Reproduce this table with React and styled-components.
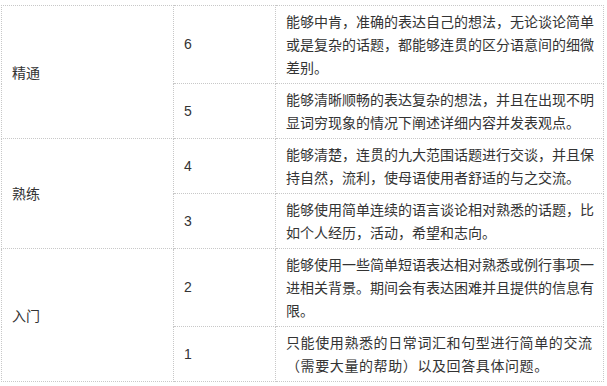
import React from "react"
import styled, { createGlobalStyle } from "styled-components"

const levels = [
  {
    name: "精通",
    rows: [
      { score: 6, text: "能够中肯，准确的表达自己的想法，无论谈论简单或是复杂的话题，都能够连贯的区分语意间的细微差别。" },
      { score: 5, text: "能够清晰顺畅的表达复杂的想法，并且在出现不明显词穷现象的情况下阐述详细内容并发表观点。" },
    ],
  },
  {
    name: "熟练",
    rows: [
      { score: 4, text: "能够清楚，连贯的九大范围话题进行交谈，并且保持自然，流利，使母语使用者舒适的与之交流。" },
      { score: 3, text: "能够使用简单连续的语言谈论相对熟悉的话题，比如个人经历，活动，希望和志向。" },
    ],
  },
  {
    name: "入门",
    rows: [
      { score: 2, text: "能够使用一些简单短语表达相对熟悉或例行事项一进相关背景。期间会有表达困难并且提供的信息有限。" },
      { score: 1, text: "只能使用熟悉的日常词汇和句型进行简单的交流（需要大量的帮助）以及回答具体问题。", wide: true },
    ],
  },
]

export default function App() {
  return (
    <>
      <GlobalStyle />
      <Table>
        <colgroup>
          <Col $w={172} />
          <Col $w={102} />
          <Col $w={328} />
        </colgroup>
        <tbody>
          {levels.map((level) =>
            level.rows.map((row, i) => (
              <tr key={row.score}>
                {i === 0 && <Level rowSpan={level.rows.length}>{level.name}</Level>}
                <Score>{row.score}</Score>
                <Desc $wide={row.wide}>{row.text}</Desc>
              </tr>
            ))
          )}
        </tbody>
      </Table>
    </>
  )
}

const GlobalStyle = createGlobalStyle`
  body {
    margin: 0;
    padding: 5px 0 0 1px;
    background: #ffffff;
    font-family: "Noto Sans CJK SC", "Liberation Sans", sans-serif;
  }
`

const Table = styled.table`
  width: 603px;
  table-layout: fixed;
  border-collapse: collapse;
  color: #333333;
  font-size: 14px;
  line-height: 23px;

  td {
    border: 1px dotted #c8c8c8;
    padding: 4px 8px 4px 10px;
    vertical-align: middle;
  }
`

const Col = styled.col`
  width: ${(p) => p.$w}px;
`

const Level = styled.td``

const Score = styled.td`
  font-family: "Liberation Sans", "Noto Sans CJK SC", sans-serif;
`

const Desc = styled.td`
  letter-spacing: ${(p) => (p.$wide ? "0.6px" : "0")};
`
